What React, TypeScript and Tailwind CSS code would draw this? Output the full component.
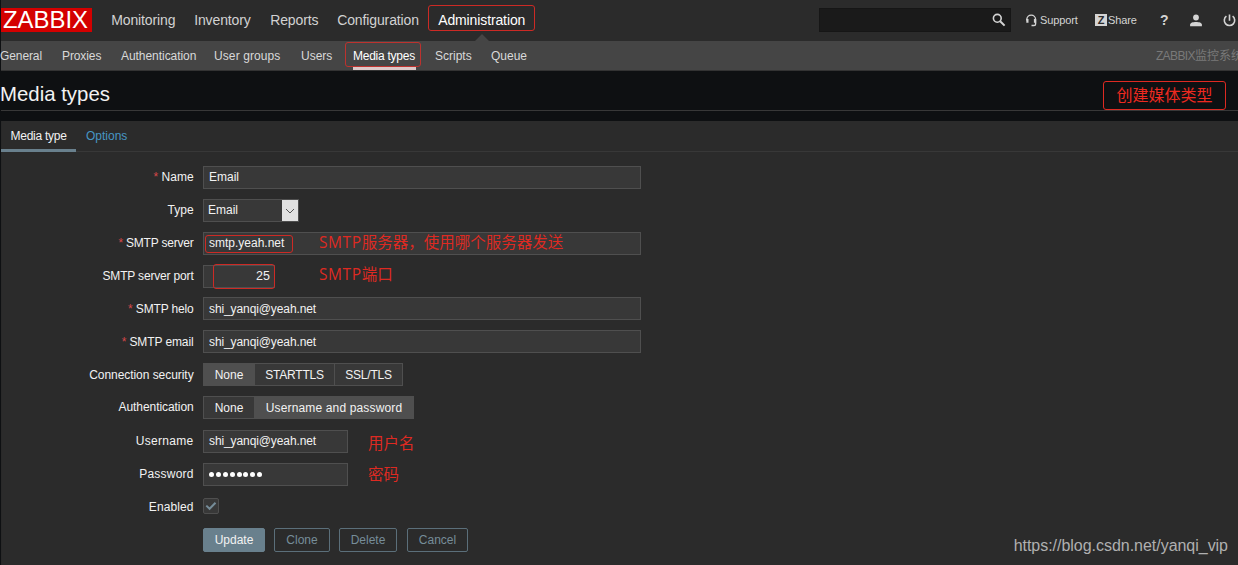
import type { ReactNode } from 'react';

import { clsx } from 'clsx';

const MENU = [
  { label: 'Monitoring', width: 'w-[83px]' },
  { label: 'Inventory', width: 'w-[76px]' },
  { label: 'Reports', width: 'w-[67px]' },
  { label: 'Configuration', width: 'w-[101px]' },
  { label: 'Administration', width: 'w-[107px]' },
];

const SUBMENU = [
  { label: 'General', style: 'w-[62px] tracking-[-0.1px]' },
  { label: 'Proxies', style: 'w-[59px] tracking-[-0.1px]' },
  { label: 'Authentication', style: 'w-[93px] tracking-[-0.05px]' },
  { label: 'User groups', style: 'w-[87px] tracking-[0.1px]' },
  { label: 'Users', style: 'w-[52px]' },
  { label: 'Media types', style: 'mr-[19px] w-[63px] tracking-[-0.25px] text-white' },
  { label: 'Scripts', style: 'w-[56px]' },
  { label: 'Queue', style: '' },
];

function SearchIcon() {
  return (
    <svg viewBox="0 0 14 14" className="h-3.5 w-3.5" fill="none" stroke="#d4d4d4">
      <circle cx="5.3" cy="5.3" r="3.9" strokeWidth="1.6" />
      <path d="M8.2 8.2L12.6 12.6" strokeWidth="2" />
    </svg>
  );
}

function SupportIcon() {
  return (
    <svg viewBox="0 0 12 13" className="h-[13px] w-3" fill="none" stroke="#d4d4d4">
      <path d="M1.8 6.5V5.5a4.4 4.4 0 0 1 8.8 0v4.4q0 1.6-1.6 1.6H6.5" strokeWidth="1.4" />
      <path d="M2.4 5v3.8M10 5v3.8" strokeWidth="2.2" />
    </svg>
  );
}

function UserIcon() {
  return (
    <svg viewBox="0 0 12 13" className="h-[13px] w-3" fill="#d4d4d4">
      <circle cx="6" cy="3.5" r="2.9" />
      <path d="M0.1 12.2V10.6C0.1 8.6 3 7.9 6 7.9s5.9 0.7 5.9 2.7v1.6z" />
    </svg>
  );
}

function PowerIcon() {
  return (
    <svg viewBox="0 0 13 13" className="h-[13px] w-[13px]" fill="none" stroke="#d4d4d4" strokeWidth="1.6">
      <path d="M3.4 2.2a5.2 5.2 0 1 0 6.2 0M6.5 0.5v6.2" />
    </svg>
  );
}

function Header() {
  return (
    <header className="flex h-[41px] items-start bg-[#2b2b2b]">
      <div className="mt-2 h-6 w-[91px] bg-[#d40000] pl-[1.5px] text-[23px] leading-6 text-white">
        <span className="inline-block origin-left scale-x-[1.04]">ZABBIX</span>
      </div>
      <nav className="ml-[9px] flex text-sm tracking-[-0.12px] text-[#d2d2d2]">
        {MENU.map(({ label, width }) => (
          <div key={label} className={clsx('relative h-[41px] pl-[10.2px] leading-[41px]', width)}>
            <span className={clsx(label === 'Administration' && 'text-white')}>{label}</span>
            {label === 'Administration' && (
              <>
                <div className="absolute top-[5px] left-0 h-[26px] w-[107px] rounded-[3px] border border-[#cd2a25]" />
                <svg viewBox="0 0 14 7" className="absolute bottom-0 left-[47px] h-[7px] w-3.5" fill="#454545">
                  <path d="M0 7L7 0L14 7z" />
                </svg>
              </>
            )}
          </div>
        ))}
      </nav>
      <div className="mt-2 mr-3.5 ml-auto flex h-6 w-48 items-center justify-end border border-[#161616] bg-[#1a1a1a] pr-1">
        <SearchIcon />
      </div>
      <div className="flex h-10 items-center text-[11px] tracking-[-0.1px] text-[#d4d4d4]">
        <div className="flex w-[70px] items-center gap-[3px]">
          <SupportIcon />
          <span>Support</span>
        </div>
        <div className="flex w-[65px] items-center gap-px">
          <span className="h-3 w-3 bg-[#d4d4d4] text-center text-[11px] leading-3 font-bold text-[#2b2b2b]">Z</span>
          <span>Share</span>
        </div>
        <span className="w-[30px] text-sm font-bold">?</span>
        <div className="w-[33px]">
          <UserIcon />
        </div>
        <div className="-mr-px w-4">
          <PowerIcon />
        </div>
      </div>
    </header>
  );
}

function SubMenu() {
  return (
    <nav className="flex h-[30px] justify-between border-b border-[#333] bg-[#454545] text-xs leading-[30px] text-[#d9d9d9]">
      <div className="-ml-px flex">
        {SUBMENU.map(({ label, style }) => (
          <div key={label} className={clsx('relative h-[29px] whitespace-nowrap', style)}>
            {label}
            {label === 'Media types' && (
              <>
                <div className="absolute inset-x-0 bottom-0 h-[3px] bg-[#dcc8c8]" />
                <div className="absolute top-px -left-[8px] h-[25px] w-[76px] rounded-[3px] border border-[#bd322e]" />
              </>
            )}
          </div>
        ))}
      </div>
      <span className="-mr-[5px] whitespace-nowrap text-[#797979]">
        <span className="tracking-[-0.6px]">ZABBIX</span>监控系统
      </span>
    </nav>
  );
}

type RowProps = {
  label: string;
  required?: boolean;
  className?: string;
  labelClass?: string;
  children: ReactNode;
};

function Row({ label, required, className, labelClass, children }: RowProps) {
  return (
    <div className={clsx('flex items-start', className ?? 'h-[33px]')}>
      <label className={clsx('mr-[9.4px] w-[191.6px] text-right', labelClass ?? 'leading-[23px]')}>
        {required && <span className="text-[#d5484a]">* </span>}
        {label}
      </label>
      {children}
    </div>
  );
}

function Field({ value, className }: { value: string; className?: string }) {
  return (
    <div className={clsx('h-[23px] border border-[#4f4f4f] bg-[#383838]', className ?? 'w-[438px] px-[5px] leading-[21px]')}>
      {value}
    </div>
  );
}

function Note({ className, children }: { className: string; children: ReactNode }) {
  return (
    <span
      className={clsx(
        "absolute font-['Open_Sans','Noto_Sans_CJK_SC',sans-serif] text-[15.5px] leading-5 whitespace-nowrap text-[#de2a22]",
        className,
      )}
    >
      {children}
    </span>
  );
}

function Segmented({ items, active }: { items: [string, string][]; active: string }) {
  return (
    <div className="flex h-[23px] border border-[#4f4f4f] bg-[#383838] leading-[22px]">
      {items.map(([item, style], i) => (
        <div
          key={item}
          className={clsx('text-center', style, i > 0 && 'border-l border-[#4f4f4f]', item === active && 'bg-[#4f4f4f]')}
        >
          {item}
        </div>
      ))}
    </div>
  );
}

function MediaTypeForm() {
  return (
    <div className="pt-3.5 text-[#f2f2f2]">
      <Row label="Name" required labelClass="leading-[23px]">
        <Field value="Email" />
      </Row>
      <Row label="Type">
        <div className="flex h-[23px] w-24 justify-between border border-[#4f4f4f] bg-[#383838] pl-1 leading-[21px]">
          Email
          <span className="flex w-4 items-center justify-center bg-[#e1e1e1]">
            <svg viewBox="0 0 10 6" className="h-1.5 w-2.5" fill="none" stroke="#555">
              <path d="M1 1l4 4l4-4" />
            </svg>
          </span>
        </div>
      </Row>
      <Row label="SMTP server" required labelClass="leading-[23px] tracking-[-0.2px]">
        <div className="relative">
          <Field value="smtp.yeah.net" />
          <div className="absolute top-[3px] left-[2px] h-[18px] w-[88px] rounded-[3px] border border-[#cd2a25]" />
          <Note className="top-0 left-[116px]">
            <span className="tracking-[0.6px]">SMTP</span>服务器，使用哪个服务器发送
          </Note>
        </div>
      </Row>
      <Row label="SMTP server port" className="h-8" labelClass="leading-[23px] tracking-[-0.17px]">
        <div className="relative">
          <Field value="25" className="w-[72px] pr-1 text-right text-[12.5px] leading-[21px]" />
          <div className="absolute -top-px left-2.5 h-[25px] w-[62px] rounded-[3px] border border-[#cd2a25]" />
          <Note className="-top-px left-[116px]">
            <span className="tracking-[0.6px]">SMTP</span>端口
          </Note>
        </div>
      </Row>
      <Row label="SMTP helo" required labelClass="leading-6 tracking-[-0.15px]">
        <Field value="shi_yanqi@yeah.net" className="w-[438px] px-[5px] leading-[22px] tracking-[-0.1px]" />
      </Row>
      <Row label="SMTP email" required labelClass="leading-6 tracking-[-0.1px]">
        <Field value="shi_yanqi@yeah.net" className="w-[438px] px-[5px] leading-[22px] tracking-[-0.1px]" />
      </Row>
      <Row label="Connection security" labelClass="leading-6 tracking-[-0.05px]">
        <Segmented
          items={[['None', 'w-[50px]'], ['STARTTLS', 'w-[80px] tracking-[-0.2px]'], ['SSL/TLS', 'w-[68px] tracking-[-0.2px]']]}
          active="None"
        />
      </Row>
      <Row label="Authentication" className="h-[34px]" labelClass="leading-[23px] tracking-[-0.07px]">
        <Segmented
          items={[['None', 'w-[50px]'], ['Username and password', 'w-[159px] tracking-[0.15px]']]}
          active="Username and password"
        />
      </Row>
      <Row label="Username" labelClass="leading-[23px] tracking-[0.3px]">
        <div className="relative">
          <Field value="shi_yanqi@yeah.net" className="w-[145px] px-[5px] leading-[21px] tracking-[-0.1px]" />
          <Note className="top-[3px] left-[165px]">用户名</Note>
        </div>
      </Row>
      <Row label="Password" labelClass="leading-[23px] tracking-[0.2px]">
        <div className="relative">
          <div className="flex h-[23px] w-[145px] items-center gap-[1.8px] border border-[#4f4f4f] bg-[#383838] pl-[5.5px]">
            {Array.from({ length: 8 }, (_, i) => (
              <span key={i} className="h-[5px] w-[5px] rounded-full bg-white" />
            ))}
          </div>
          <Note className="top-px left-[165px]">密码</Note>
        </div>
      </Row>
      <Row label="Enabled" className="h-8" labelClass="leading-[23px] tracking-[0.1px]">
        <span className="mt-[2px] flex h-4 w-4 items-center justify-center rounded-xs border border-[#4f4f4f] bg-[#383838]">
          <svg viewBox="0 0 12 10" className="h-2.5 w-3" fill="none" stroke="#768d99" strokeWidth="2">
            <path d="M1.3 4.6l3.3 3.2L10.5 1.8" />
          </svg>
        </span>
      </Row>
      <div className="ml-[201px] flex h-6 items-start gap-[9px] text-center leading-[22px] text-[#768d99]">
        <div className="h-6 w-[62px] rounded-xs border border-[#69808d] bg-[#69808d] text-[#f2f2f2]">Update</div>
        <div className="h-6 w-14 rounded-xs border border-[#5b6f7a]">Clone</div>
        <div className="h-6 w-[58px] rounded-xs border border-[#5b6f7a]">Delete</div>
        <div className="ml-px h-6 w-[61px] rounded-xs border border-[#5b6f7a]">Cancel</div>
      </div>
    </div>
  );
}

export default function App() {
  return (
    <div className="relative h-[565px] w-[1238px] overflow-hidden bg-[#0e1012] pl-px font-['Liberation_Sans','Noto_Sans_CJK_SC',sans-serif] text-xs">
      <Header />
      <SubMenu />
      <div className="relative h-10 border-b border-[#383838]">
        <h1 className="-ml-px text-[20.4px] leading-[47px] text-[#f2f2f2]">Media types</h1>
        <div className="absolute top-[10px] right-3 h-[29px] w-[123px] rounded-[3px] border border-[#de2a22] text-center text-base leading-[27px] text-[#ee2a20]">
          创建媒体类型
        </div>
      </div>
      <main className="mt-2.5 h-[444px] border-l border-[#292929] bg-[#2b2b2b]">
        <div className="-ml-px flex h-[31px] border-b border-[#383838] leading-[30px]">
          <span className="h-[31px] w-[75px] border-b-3 border-[#69808d] pl-[9.5px] tracking-[-0.25px] text-[#f2f2f2]">
            Media type
          </span>
          <span className="pl-[10px] text-[#4796c4]">Options</span>
        </div>
        <MediaTypeForm />
      </main>
      <span className="absolute right-2.5 bottom-[9px] text-base leading-5 tracking-[-0.03px] text-[#b0b0b0]">
        https://blog.csdn.net/yanqi_vip
      </span>
    </div>
  );
}
